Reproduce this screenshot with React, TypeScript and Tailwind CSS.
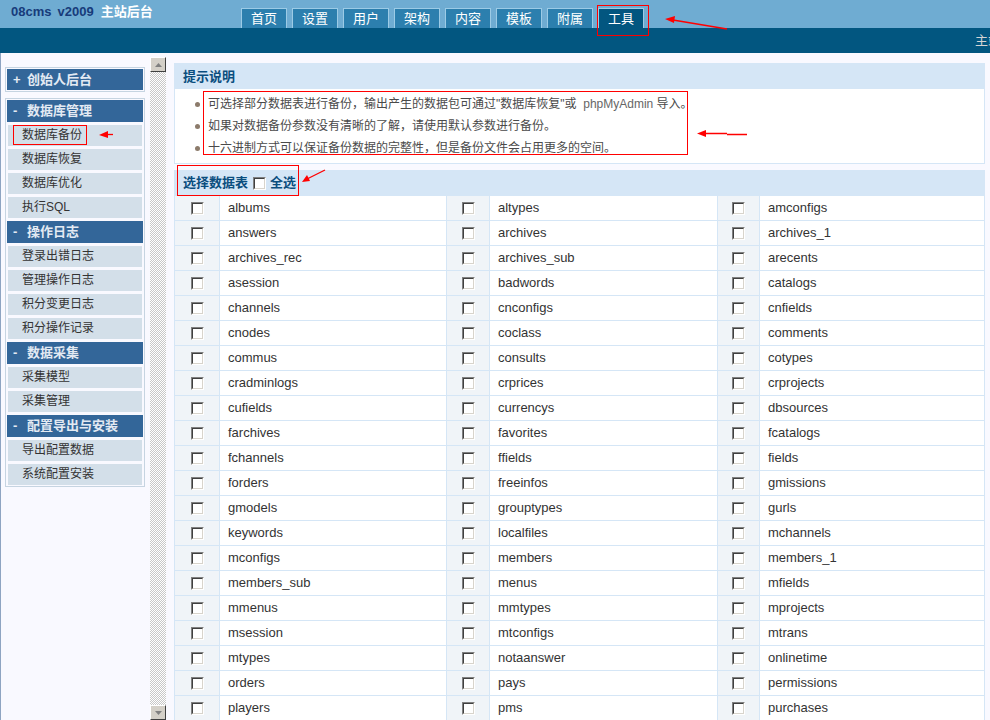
import React from 'react';

const tabs = ['首页', '设置', '用户', '架构', '内容', '模板', '附属', '工具'];

const sections = [
  { title: '数据库管理', items: ['数据库备份', '数据库恢复', '数据库优化', '执行SQL'] },
  { title: '操作日志', items: ['登录出错日志', '管理操作日志', '积分变更日志', '积分操作记录'] },
  { title: '数据采集', items: ['采集模型', '采集管理'] },
  { title: '配置导出与安装', items: ['导出配置数据', '系统配置安装'] },
];

const tables = [
  ['albums', 'altypes', 'amconfigs'],
  ['answers', 'archives', 'archives_1'],
  ['archives_rec', 'archives_sub', 'arecents'],
  ['asession', 'badwords', 'catalogs'],
  ['channels', 'cnconfigs', 'cnfields'],
  ['cnodes', 'coclass', 'comments'],
  ['commus', 'consults', 'cotypes'],
  ['cradminlogs', 'crprices', 'crprojects'],
  ['cufields', 'currencys', 'dbsources'],
  ['farchives', 'favorites', 'fcatalogs'],
  ['fchannels', 'ffields', 'fields'],
  ['forders', 'freeinfos', 'gmissions'],
  ['gmodels', 'grouptypes', 'gurls'],
  ['keywords', 'localfiles', 'mchannels'],
  ['mconfigs', 'members', 'members_1'],
  ['members_sub', 'menus', 'mfields'],
  ['mmenus', 'mmtypes', 'mprojects'],
  ['msession', 'mtconfigs', 'mtrans'],
  ['mtypes', 'notaanswer', 'onlinetime'],
  ['orders', 'pays', 'permissions'],
  ['players', 'pms', 'purchases'],
];

const hints = [
  <>可选择部分数据表进行备份，输出产生的数据包可通过"数据库恢复"或&nbsp; <span className="text-[#666]">phpMyAdmin</span> 导入。</>,
  <>如果对数据备份参数没有清晰的了解，请使用默认参数进行备份。</>,
  <>十六进制方式可以保证备份数据的完整性，但是备份文件会占用更多的空间。</>,
];

function Checkbox() {
  return (
    <span className="inline-block w-[13px] h-[13px] border border-t-[#808080] border-l-[#808080] border-b-white border-r-white">
      <span className="block w-full h-full bg-white border border-t-[#404040] border-l-[#404040] border-b-[#d8d4cc] border-r-[#d8d4cc]" />
    </span>
  );
}

function ScrollButton({ down }: { down?: boolean }) {
  return (
    <div className="h-[15px] bg-[#d4d0c8] border border-t-white border-l-white border-b-[#404040] border-r-[#404040] flex items-center justify-center">
      <svg width="7" height="4" viewBox="0 0 7 4">
        {down ? <path d="M0 0h7L3.5 4z" fill="#808080" /> : <path d="M0 4h7L3.5 0z" fill="#808080" />}
      </svg>
    </div>
  );
}

export default function App() {
  return (
    <div className="relative w-[990px] h-[720px] overflow-hidden bg-[#f9f9ff] font-['Liberation_Sans','Noto_Sans_CJK_SC',sans-serif]">
      {/* TOP BAR */}
      <div className="h-[28px] bg-[#6facd2] flex">
        <div className="w-[241px] pl-[11px] pt-[4px] text-[13px] leading-[16px] font-bold whitespace-nowrap">
          <span className="text-[#173b7a]">08cms</span>
          <span className="text-[#173b7a] ml-[6px]">v2009</span>
          <span className="text-white ml-[7px]">主站后台</span>
        </div>
        <div className="flex gap-[5px] pt-[8px]">
          {tabs.map((t, i) => (
            <div
              key={t}
              className={`w-[46px] h-[20px] border border-b-0 border-[#9ccbe6] text-white text-[13px] leading-[19px] text-center ${
                i === tabs.length - 1 ? 'bg-[#025680]' : 'bg-[#2c7fae]'
              }`}
            >
              {t}
            </div>
          ))}
        </div>
      </div>
      <div className="h-[25px] bg-[#025680] pl-[975px] whitespace-nowrap overflow-hidden text-[13px] leading-[25px] text-[#d4d4d4]">
        主站首页
      </div>

      <div className="flex h-[667px]">
        {/* SIDEBAR */}
        <div className="w-[150px] border-l border-[#8ea4c2] pl-[4px] pr-[5px]">
          <div className="mt-[14px] border border-[#c6d4e1] p-[1px]">
            <div className="h-[21px] bg-[#336699] flex items-center pl-[6px] text-[13px] font-bold text-[#e3eaf3]">
              <span className="w-[14px]">+</span>
              创始人后台
            </div>
          </div>
          <div className="mt-[6px] border border-[#c6d4e1] p-[1px]">
            {sections.map((s, si) => (
              <div key={s.title}>
                <div className={`h-[22px] bg-[#336699] flex items-center pl-[6px] text-[13px] font-bold text-[#e3eaf3] ${si ? 'mt-[3px]' : ''}`}>
                  <span className="w-[14px]">-</span>
                  {s.title}
                </div>
                {s.items.map((it) => (
                  <div key={it} className="mx-[1px] mt-[3px] h-[21px] bg-[#d3dfe9] pl-[14px] text-[12px] leading-[21px] text-[#333]">
                    {it}
                  </div>
                ))}
              </div>
            ))}
          </div>
        </div>

        {/* SCROLLBAR */}
        <div className="w-[16px] mt-[4px] flex flex-col">
          <ScrollButton />
          <div className="flex-1 bg-[repeating-conic-gradient(#c8c8c8_0%_25%,#ffffff_0%_50%)] bg-[length:2px_2px]" />
          <ScrollButton down />
        </div>
        <div className="w-[8px]" />

        {/* MAIN */}
        <div className="w-[811px] pt-[10px]">
          <div className="border border-[#d5e6f6] bg-white">
            <div className="h-[25px] bg-[#d5e6f6] pl-[8px] text-[13px] leading-[25px] font-bold text-[#0b4e7e]">提示说明</div>
            <div className="pt-[4px] pb-[4px] pl-[20px]">
              {hints.map((h, i) => (
                <div key={i} className="flex items-center h-[22px] text-[12px] text-[#4a4a4a] whitespace-nowrap">
                  <span className="w-[5px] h-[5px] rounded-full bg-[#8c7b6b] mr-[8px]" />
                  <span>{h}</span>
                </div>
              ))}
            </div>
          </div>

          <div className="mt-[6px] border-x border-[#d5e6f6] bg-white">
            <div className="h-[26px] bg-[#d5e6f6] flex items-center pl-[8px] text-[13px] font-bold text-[#0b4e7e]">
              <span>选择数据表</span>
              <span className="ml-[5px] mr-[4px] flex">
                <Checkbox />
              </span>
              <span>全选</span>
            </div>
            {tables.map((row) => (
              <div key={row[0]} className="grid grid-cols-[44px_227px_43px_228px_42px_226px] h-[25px] border-b border-[#d5e6f6]">
                {row.map((name, ci) => (
                  <React.Fragment key={name}>
                    <div className={`bg-[#f0f4f8] flex items-center justify-center ${ci ? 'border-l border-[#d5e6f6]' : ''}`}>
                      <Checkbox />
                    </div>
                    <div className="border-l border-[#d5e6f6] pl-[8px] text-[13px] leading-[24px] text-[#333]">{name}</div>
                  </React.Fragment>
                ))}
              </div>
            ))}
          </div>
        </div>
      </div>

      {/* ANNOTATIONS */}
      <div className="absolute left-[597px] top-[5px] w-[52px] h-[31px] border border-[#ff0000]" />
      <div className="absolute left-[13px] top-[125px] w-[74px] h-[20px] border border-[#ff0000]" />
      <div className="absolute left-[203px] top-[91px] w-[485px] h-[64px] border border-[#ff0000]" />
      <div className="absolute left-[177px] top-[165px] w-[122px] h-[31px] border border-[#ff0000]" />
      <svg className="absolute left-0 top-0 pointer-events-none" width="990" height="720" viewBox="0 0 990 720">
        <g stroke="#ff0000" strokeWidth="1.3" fill="none">
          <path d="M673 20 L727 29" />
          <path d="M106 134.5 L113 134.5" />
          <path d="M704 133.5 L727 133.5 M727 134.5 L747 134.5" />
          <path d="M307 179 L325 170" />
        </g>
        <g fill="#ff0000">
          <path d="M665 19 L675 16 L674 23 Z" />
          <path d="M99 135 L108 131 L108 138 Z" />
          <path d="M697 133.5 L706 130 L706 137 Z" />
          <path d="M302 182 L307 175 L310 181 Z" />
        </g>
      </svg>
    </div>
  );
}
